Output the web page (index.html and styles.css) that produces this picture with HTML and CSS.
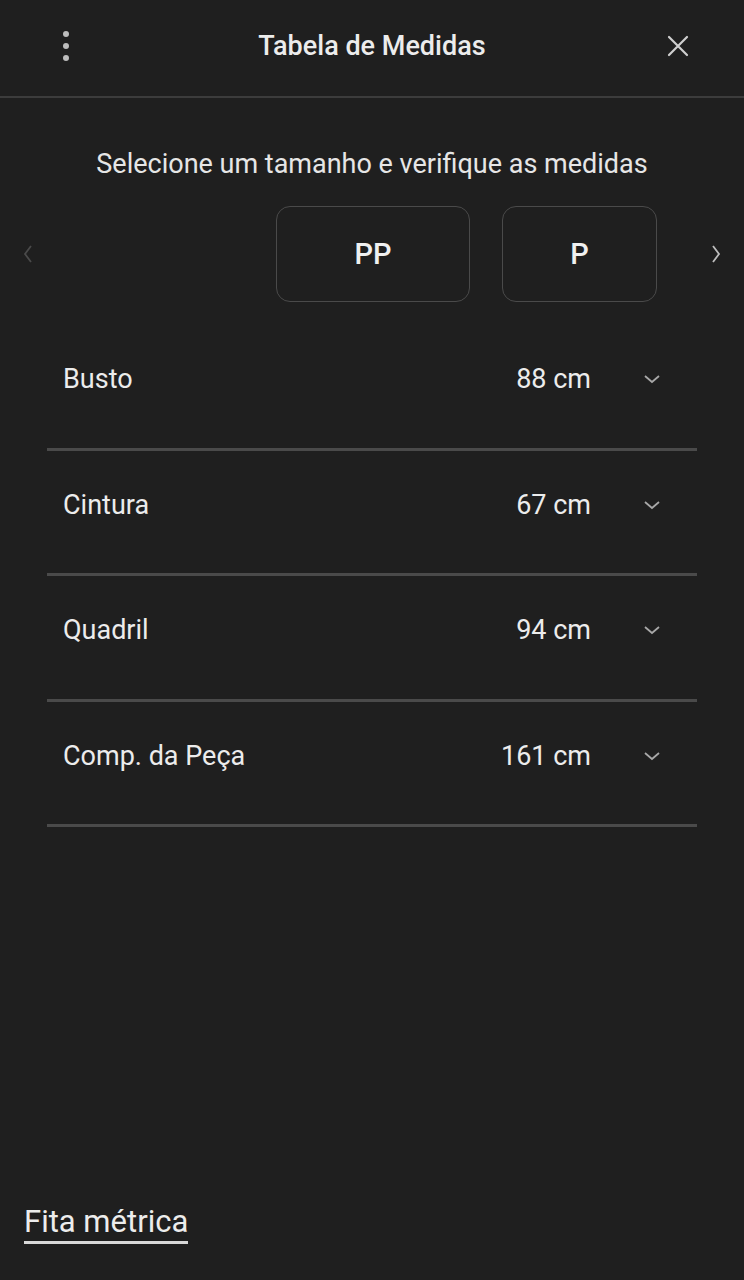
FILE: index.html
```html
<!DOCTYPE html>
<html lang="pt">
<head>
<meta charset="utf-8">
<link rel="stylesheet" href="styles.css">
</head>
<body>
<div class="page">
  <header class="header">
    <button class="icon-btn kebab" aria-label="Mais">
      <svg width="24" height="40" viewBox="0 0 24 40"><circle cx="12" cy="8" r="3" fill="#bdbdbd"/><circle cx="12" cy="20" r="3" fill="#bdbdbd"/><circle cx="12" cy="32" r="3" fill="#bdbdbd"/></svg>
    </button>
    <h1 class="title">Tabela de Medidas</h1>
    <button class="icon-btn close" aria-label="Fechar">
      <svg width="24" height="24" viewBox="0 0 24 24"><path d="M3 3 L21 21 M21 3 L3 21" stroke="#cfcfcf" stroke-width="2.2" stroke-linecap="round"/></svg>
    </button>
  </header>
  <main class="content">
    <p class="subtitle">Selecione um tamanho e verifique as medidas</p>
    <div class="sizes">
      <button class="arrow left" aria-label="Anterior">
        <svg width="12" height="20" viewBox="0 0 12 20"><path d="M9 2 L3 10 L9 18" fill="none" stroke="#4a4a4a" stroke-width="1.8"/></svg>
      </button>
      <div class="size-list">
        <button class="size pp">PP</button>
        <button class="size p">P</button>
      </div>
      <button class="arrow right" aria-label="Próximo">
        <svg width="12" height="20" viewBox="0 0 12 20"><path d="M3 2 L9 10 L3 18" fill="none" stroke="#bdbdbd" stroke-width="1.8"/></svg>
      </button>
    </div>
    <ul class="rows">
      <li class="row"><span class="label">Busto</span><span class="value">88 cm</span><span class="chev"><svg width="18" height="10" viewBox="0 0 18 10"><path d="M2 2 L9 8 L16 2" fill="none" stroke="#a8a8a8" stroke-width="1.8"/></svg></span></li>
      <li class="row"><span class="label">Cintura</span><span class="value">67 cm</span><span class="chev"><svg width="18" height="10" viewBox="0 0 18 10"><path d="M2 2 L9 8 L16 2" fill="none" stroke="#a8a8a8" stroke-width="1.8"/></svg></span></li>
      <li class="row"><span class="label">Quadril</span><span class="value">94 cm</span><span class="chev"><svg width="18" height="10" viewBox="0 0 18 10"><path d="M2 2 L9 8 L16 2" fill="none" stroke="#a8a8a8" stroke-width="1.8"/></svg></span></li>
      <li class="row"><span class="label">Comp. da Peça</span><span class="value">161 cm</span><span class="chev"><svg width="18" height="10" viewBox="0 0 18 10"><path d="M2 2 L9 8 L16 2" fill="none" stroke="#a8a8a8" stroke-width="1.8"/></svg></span></li>
    </ul>
  </main>
  <footer class="footer">
    <a class="tape" href="#">Fita métrica</a>
  </footer>
</div>
</body>
</html>
```
FILE: styles.css
```css
* { box-sizing: border-box; }
html, body { margin: 0; padding: 0; background: #1f1f1f; }
body { font-family: Roboto, "Noto Sans", sans-serif; color: #ececec; }
.page { width: 744px; height: 1280px; display: flex; flex-direction: column; }
.header {
  height: 98px;
  border-bottom: 2px solid #3c3c3c;
  display: flex; align-items: center; justify-content: space-between;
  padding: 0 54px 0 54px;
}
.icon-btn { background: none; border: 0; padding: 0; display: flex; align-items: center; justify-content: center; margin-top: -4px; }
.title { margin: 0; font-size: 27px; font-weight: 500; color: #ececec; margin-top: -4px; }
.content { flex: 1; display: flex; flex-direction: column; }
.subtitle { margin: 50px 0 0; text-align: center; font-size: 27px; line-height: 32px; color: #e6e6e6; }
.sizes { margin-top: 26px; height: 96px; display: flex; align-items: center; padding: 0 0 0 22px; }
.arrow { background: none; border: 0; padding: 0; width: 12px; height: 20px; display: flex; }
.size-list { flex: 1; display: flex; gap: 32px; padding-left: 242px; }
.size {
  height: 96px; background: none; border: 1.5px solid #4a4a4a; border-radius: 14px;
  color: #f0f0f0; font-family: Roboto, sans-serif; font-size: 29px; font-weight: 500;
}
.size.pp { width: 194px; }
.size.p { width: 155px; }
.arrow.right { margin-right: 22px; }
.rows { list-style: none; margin: 23px 47px 0 47px; padding: 0; }
.row {
  height: 125.5px; display: flex; align-items: center;
  border-bottom: 3px solid #4a4a4a;
  padding: 0 0 14px 16px;
}
.label { flex: 1; font-size: 27px; color: #ececec; }
.value { font-size: 27px; color: #ececec; }
.chev { width: 18px; display: flex; margin-left: 52px; margin-right: 36px; }
.footer { padding: 0 0 0 24px; height: 96px; }
.tape {
  display: inline-block; color: #ececec; font-size: 31px; text-decoration: none;
  border-bottom: 3px solid #d8d8d8; line-height: 38px; padding-bottom: 0; margin-top: 19px;
}
```
